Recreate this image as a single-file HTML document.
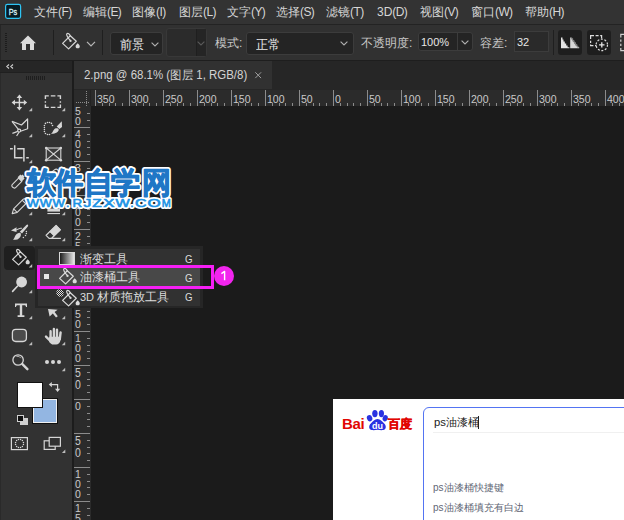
<!DOCTYPE html><html><head><meta charset="utf-8"><style>
*{margin:0;padding:0;box-sizing:border-box}
html,body{width:624px;height:520px;overflow:hidden;background:#1b1b1b;font-family:"Liberation Sans",sans-serif;position:relative}
.a{position:absolute}
.menu span{position:absolute;top:5px;font-size:12px;color:#d6d6d6;white-space:nowrap;line-height:15px}
.sep{position:absolute;width:1px;background:#1f1f1f}
.dd{position:absolute;background:#242424;border:1px solid #3c3c3c;border-radius:3px}
.lbl{position:absolute;font-size:12px;color:#c8c8c8;white-space:nowrap;line-height:15px}
.rn{position:absolute;font-size:10.5px;color:#c9c9c9;line-height:10px;white-space:nowrap}
.t{position:absolute;background:#8c8c8c}
.ic{position:absolute;overflow:visible}
.fl{position:absolute;font-size:12px;color:#dcdcdc;white-space:nowrap;line-height:15px}
</style></head><body>
<div class="a menu" style="left:0;top:0;width:624px;height:24px;background:#333333">
<svg class="ic" style="left:0;top:0" width="26" height="24" viewBox="0 0 26 24"><rect x="5.6" y="4.4" width="15" height="14" rx="1.8" fill="#061c24" stroke="#2ec4f4" stroke-width="1.2"/><text x="8.7" y="15.1" textLength="8.5" lengthAdjust="spacingAndGlyphs" font-family="Liberation Sans" font-size="9.6" fill="#dff5fb" stroke="#dff5fb" stroke-width="0.3">Ps</text></svg>
<span style="left:34px">文件<i style="font-style:normal;letter-spacing:-0.6px">(F)</i></span>
<span style="left:83px">编辑<i style="font-style:normal;letter-spacing:-0.6px">(E)</i></span>
<span style="left:132px">图像<i style="font-style:normal;letter-spacing:-0.6px">(I)</i></span>
<span style="left:179px">图层<i style="font-style:normal;letter-spacing:-0.6px">(L)</i></span>
<span style="left:227px">文字<i style="font-style:normal;letter-spacing:-0.6px">(Y)</i></span>
<span style="left:276px">选择<i style="font-style:normal;letter-spacing:-0.6px">(S)</i></span>
<span style="left:326px">滤镜<i style="font-style:normal;letter-spacing:-0.6px">(T)</i></span>
<span style="left:377px">3D<i style="font-style:normal;letter-spacing:-0.6px">(D)</i></span>
<span style="left:420px">视图<i style="font-style:normal;letter-spacing:-0.6px">(V)</i></span>
<span style="left:471px">窗口<i style="font-style:normal;letter-spacing:-0.6px">(W)</i></span>
<span style="left:525px">帮助<i style="font-style:normal;letter-spacing:-0.6px">(H)</i></span>
</div>
<div class="a" style="left:0;top:24px;width:624px;height:1px;background:#232323"></div>
<div class="a" style="left:0;top:25px;width:624px;height:35px;background:#313131"></div>
<div class="a" style="left:0;top:60px;width:624px;height:1px;background:#1e1e1e"></div>
<div class="a" style="left:5px;top:33px;width:2px;height:1px;background:#1c1c1c"></div>
<div class="a" style="left:5px;top:35px;width:2px;height:1px;background:#1c1c1c"></div>
<div class="a" style="left:5px;top:37px;width:2px;height:1px;background:#1c1c1c"></div>
<div class="a" style="left:5px;top:39px;width:2px;height:1px;background:#1c1c1c"></div>
<div class="a" style="left:5px;top:41px;width:2px;height:1px;background:#1c1c1c"></div>
<div class="a" style="left:5px;top:43px;width:2px;height:1px;background:#1c1c1c"></div>
<div class="a" style="left:5px;top:45px;width:2px;height:1px;background:#1c1c1c"></div>
<div class="a" style="left:5px;top:47px;width:2px;height:1px;background:#1c1c1c"></div>
<div class="a" style="left:5px;top:49px;width:2px;height:1px;background:#1c1c1c"></div>
<div class="a" style="left:5px;top:51px;width:2px;height:1px;background:#1c1c1c"></div>
<div class="a" style="left:0;top:25px;width:1px;height:35px;background:#262626"></div>
<svg class="ic" style="left:19px;top:35px" width="18" height="16" viewBox="0 0 18 16"><path d="M9 0.5 L17 8.2 L15 8.2 L15 15 L11 15 L11 9 L7 9 L7 15 L3 15 L3 8.2 L1 8.2 Z" fill="#dcdcdc"/></svg>
<div class="sep" style="left:53px;top:30px;height:25px"></div>
<div class="sep" style="left:102px;top:30px;height:25px"></div>
<svg class="ic" style="left:61px;top:33px" width="20.0" height="19.0" viewBox="0 0 20 19"><g fill="none" stroke="#d6d6d6" stroke-width="1.2" stroke-linejoin="round" stroke-linecap="round"><path d="M1.6 10.4 L7.6 15.9 L15.3 8.3 L9.3 2.8 Z"/><path d="M9.3 2.8 C8.6 1.2 6.9 -0.1 5.9 0.7 C5 1.5 6.4 4.2 9.3 7.4"/></g><circle cx="9.5" cy="7.9" r="1.15" fill="#d6d6d6"/><path d="M16.7 10.2 C17.6 11.3 18.8 12.2 18.8 13.4 C18.8 14.6 17.9 15.3 16.7 15.3 C15.5 15.3 14.6 14.6 14.6 13.4 C14.6 12.2 15.8 11.3 16.7 10.2 Z" fill="#d6d6d6"/></svg>
<svg class="ic" style="left:86px;top:41px" width="10" height="6" viewBox="0 0 10 6"><path d="M1 0.8 L5 4.8 L9 0.8" fill="none" stroke="#b8b8b8" stroke-width="1.2"/></svg>
<div class="dd" style="left:110px;top:32px;width:53px;height:23px"></div>
<div class="lbl" style="left:120px;top:37px;color:#e8e8e8;font-size:13px;transform:scaleX(0.93);transform-origin:0 0">前景</div>
<svg class="ic" style="left:151px;top:42px" width="8" height="5" viewBox="0 0 8 5"><path d="M0.6 0.6 L4 4 L7.4 0.6" fill="none" stroke="#b0b0b0" stroke-width="1.1"/></svg>
<div class="dd" style="left:166px;top:28px;width:41px;height:29px;background:#2b2b2b;border-color:#383838"></div>
<div class="a" style="left:196px;top:29px;width:10px;height:27px;background:#252525;border-left:1px solid #1f1f1f"></div>
<svg class="ic" style="left:197px;top:41px" width="8" height="5" viewBox="0 0 8 5"><path d="M0.6 0.6 L4 4 L7.4 0.6" fill="none" stroke="#5a5a5a" stroke-width="1.1"/></svg>
<div class="lbl" style="left:215px;top:36px">模式:</div>
<div class="dd" style="left:246px;top:32px;width:108px;height:23px"></div>
<div class="lbl" style="left:256px;top:37px;color:#e8e8e8;font-size:13px;transform:scaleX(0.93);transform-origin:0 0">正常</div>
<svg class="ic" style="left:340px;top:41px" width="8" height="5" viewBox="0 0 8 5"><path d="M0.6 0.6 L4 4 L7.4 0.6" fill="none" stroke="#b0b0b0" stroke-width="1.1"/></svg>
<div class="lbl" style="left:361px;top:36px">不透明度:</div>
<div class="dd" style="left:418px;top:32px;width:55px;height:19px"></div>
<div class="a" style="left:457px;top:33px;width:1px;height:17px;background:#3c3c3c"></div>
<div class="lbl" style="left:421px;top:35px;color:#e6e6e6;font-size:11px">100%</div>
<svg class="ic" style="left:461px;top:40px" width="8" height="5" viewBox="0 0 8 5"><path d="M0.6 0.6 L4 4 L7.4 0.6" fill="none" stroke="#b0b0b0" stroke-width="1.1"/></svg>
<div class="lbl" style="left:480px;top:36px">容差:</div>
<div class="dd" style="left:514px;top:31px;width:35px;height:21px;border-radius:0;background:#2a2a2a"></div>
<div class="lbl" style="left:517px;top:35px;color:#e6e6e6;font-size:11px">32</div>
<div class="sep" style="left:553px;top:30px;height:25px"></div>
<div class="a" style="left:558px;top:30px;width:24px;height:25px;background:#1e1e1e;border-radius:3px"></div>
<div class="a" style="left:587px;top:30px;width:24px;height:25px;background:#1e1e1e;border-radius:3px"></div>
<svg class="ic" style="left:0;top:0" width="624" height="60" viewBox="0 0 624 60"><path d="M561 37.4 H562.5 V39.4 H563.5 V41.4 H564.8 V43.4 H566.2 V45.4 H567.6 V47.2 H569.4 V48.2 H561 Z" fill="#e4e4e4"/><path d="M570.2 37.4 H571.6 V39.4 H572.8 V41.4 H574.2 V43.4 H575.6 V45.4 H577.2 V47.2 H579.2 V48.2 H570.2 Z" fill="#d8d8d8"/><path d="M571.6 38.4 H572.6 V40.4 H574 V42.4 H575.4 V44.4 H576.8 V46.4 H578.4" fill="none" stroke="#8a8a8a" stroke-width="1"/><g fill="none" stroke="#dcdcdc" stroke-width="1.2"><path d="M590.6 39 V35.6 H594 M595.6 35.6 H598.6 M600.2 35.6 H601.6 V38.6 M590.6 40.8 V43 M590.6 44.4 V45.6 H593.4 M595 45.6 H596.4"/><circle cx="601.8" cy="44.9" r="5.7" stroke-dasharray="2 1.6"/></g><path d="M601.8 42.2 V47.6 M599.1 44.9 H604.5" stroke="#e8e8e8" stroke-width="1.3"/><path d="M624 34.4 H620.8 V37.4 M620.8 39.4 V41.8 M620.8 43.8 V46 M620.8 48 V50.6 H624" fill="none" stroke="#d0d0d0" stroke-width="1.2"/></svg>
<div class="a" style="left:0;top:61px;width:72px;height:459px;background:#323232"></div>
<div class="a" style="left:0;top:61px;width:72px;height:12px;background:#262626"></div>
<div class="a" style="left:0;top:72px;width:72px;height:1px;background:#202020"></div>
<div class="a" style="left:0;top:73px;width:1px;height:447px;background:#2a2a2a"></div>
<svg class="ic" style="left:6px;top:64px" width="8" height="5" viewBox="0 0 8 5"><path d="M3 0.5 L0.8 2.5 L3 4.5 M7 0.5 L4.8 2.5 L7 4.5" fill="none" stroke="#cfcfcf" stroke-width="1.1"/></svg>
<div class="a" style="left:72px;top:61px;width:2px;height:459px;background:#1c1c1c"></div>
<div class="a" style="left:26px;top:76px;width:1px;height:4px;background:#1e1e1e"></div>
<div class="a" style="left:28px;top:76px;width:1px;height:4px;background:#1e1e1e"></div>
<div class="a" style="left:30px;top:76px;width:1px;height:4px;background:#1e1e1e"></div>
<div class="a" style="left:32px;top:76px;width:1px;height:4px;background:#1e1e1e"></div>
<div class="a" style="left:34px;top:76px;width:1px;height:4px;background:#1e1e1e"></div>
<div class="a" style="left:36px;top:76px;width:1px;height:4px;background:#1e1e1e"></div>
<div class="a" style="left:38px;top:76px;width:1px;height:4px;background:#1e1e1e"></div>
<div class="a" style="left:40px;top:76px;width:1px;height:4px;background:#1e1e1e"></div>
<div class="a" style="left:42px;top:76px;width:1px;height:4px;background:#1e1e1e"></div>
<div class="a" style="left:44px;top:76px;width:1px;height:4px;background:#1e1e1e"></div>
<div class="a" style="left:74px;top:61px;width:550px;height:29px;background:#262626"></div>
<div class="a" style="left:74px;top:61px;width:198px;height:28px;background:#313131"></div>
<div class="a" style="left:84px;top:68px;font-size:12px;color:#d4d4d4;white-space:nowrap;line-height:15px;transform:scaleX(0.955);transform-origin:0 0">2.png @ 68.1% (图层 1, RGB/8)</div>
<svg class="ic" style="left:255px;top:72px" width="7" height="7" viewBox="0 0 7 7"><path d="M0.3 0.3 L6.1 6.1 M6.1 0.3 L0.3 6.1" stroke="#a0a0a0" stroke-width="1"/></svg>
<div class="a" style="left:74px;top:90px;width:550px;height:16px;background:#2b2b2b"></div>
<div class="a" style="left:74px;top:90px;width:17px;height:430px;background:#2b2b2b"></div>
<div class="a" style="left:86px;top:91px;width:1px;height:1px;background:#8a8a8a"></div>
<div class="a" style="left:86px;top:93px;width:1px;height:1px;background:#8a8a8a"></div>
<div class="a" style="left:86px;top:95px;width:1px;height:1px;background:#8a8a8a"></div>
<div class="a" style="left:86px;top:97px;width:1px;height:1px;background:#8a8a8a"></div>
<div class="a" style="left:86px;top:99px;width:1px;height:1px;background:#8a8a8a"></div>
<div class="a" style="left:86px;top:101px;width:1px;height:1px;background:#8a8a8a"></div>
<div class="a" style="left:86px;top:103px;width:1px;height:1px;background:#8a8a8a"></div>
<div class="a" style="left:86px;top:105px;width:1px;height:1px;background:#8a8a8a"></div>
<div class="a" style="left:76px;top:102px;width:1px;height:1px;background:#8a8a8a"></div>
<div class="a" style="left:78px;top:102px;width:1px;height:1px;background:#8a8a8a"></div>
<div class="a" style="left:80px;top:102px;width:1px;height:1px;background:#8a8a8a"></div>
<div class="a" style="left:82px;top:102px;width:1px;height:1px;background:#8a8a8a"></div>
<div class="a" style="left:84px;top:102px;width:1px;height:1px;background:#8a8a8a"></div>
<div class="a" style="left:86px;top:102px;width:1px;height:1px;background:#8a8a8a"></div>
<div class="a" style="left:88px;top:102px;width:1px;height:1px;background:#8a8a8a"></div>
<div class="a" style="left:90px;top:90px;width:1px;height:16px;background:#232323"></div>
<div class="t" style="left:95px;top:90px;width:1px;height:16px"></div>
<div class="rn" style="left:97px;top:94px">350</div>
<div class="t" style="left:102px;top:103px;width:1px;height:3px"></div>
<div class="t" style="left:109px;top:103px;width:1px;height:3px"></div>
<div class="t" style="left:115px;top:103px;width:1px;height:3px"></div>
<div class="t" style="left:122px;top:103px;width:1px;height:3px"></div>
<div class="t" style="left:129px;top:90px;width:1px;height:16px"></div>
<div class="rn" style="left:131px;top:94px">300</div>
<div class="t" style="left:136px;top:103px;width:1px;height:3px"></div>
<div class="t" style="left:143px;top:103px;width:1px;height:3px"></div>
<div class="t" style="left:149px;top:103px;width:1px;height:3px"></div>
<div class="t" style="left:156px;top:103px;width:1px;height:3px"></div>
<div class="t" style="left:163px;top:90px;width:1px;height:16px"></div>
<div class="rn" style="left:165px;top:94px">250</div>
<div class="t" style="left:170px;top:103px;width:1px;height:3px"></div>
<div class="t" style="left:177px;top:103px;width:1px;height:3px"></div>
<div class="t" style="left:183px;top:103px;width:1px;height:3px"></div>
<div class="t" style="left:190px;top:103px;width:1px;height:3px"></div>
<div class="t" style="left:197px;top:90px;width:1px;height:16px"></div>
<div class="rn" style="left:199px;top:94px">200</div>
<div class="t" style="left:204px;top:103px;width:1px;height:3px"></div>
<div class="t" style="left:211px;top:103px;width:1px;height:3px"></div>
<div class="t" style="left:217px;top:103px;width:1px;height:3px"></div>
<div class="t" style="left:224px;top:103px;width:1px;height:3px"></div>
<div class="t" style="left:231px;top:90px;width:1px;height:16px"></div>
<div class="rn" style="left:233px;top:94px">150</div>
<div class="t" style="left:238px;top:103px;width:1px;height:3px"></div>
<div class="t" style="left:245px;top:103px;width:1px;height:3px"></div>
<div class="t" style="left:251px;top:103px;width:1px;height:3px"></div>
<div class="t" style="left:258px;top:103px;width:1px;height:3px"></div>
<div class="t" style="left:265px;top:90px;width:1px;height:16px"></div>
<div class="rn" style="left:267px;top:94px">100</div>
<div class="t" style="left:272px;top:103px;width:1px;height:3px"></div>
<div class="t" style="left:279px;top:103px;width:1px;height:3px"></div>
<div class="t" style="left:285px;top:103px;width:1px;height:3px"></div>
<div class="t" style="left:292px;top:103px;width:1px;height:3px"></div>
<div class="t" style="left:299px;top:90px;width:1px;height:16px"></div>
<div class="rn" style="left:301px;top:94px">50</div>
<div class="t" style="left:306px;top:103px;width:1px;height:3px"></div>
<div class="t" style="left:313px;top:103px;width:1px;height:3px"></div>
<div class="t" style="left:319px;top:103px;width:1px;height:3px"></div>
<div class="t" style="left:326px;top:103px;width:1px;height:3px"></div>
<div class="t" style="left:333px;top:90px;width:1px;height:16px"></div>
<div class="rn" style="left:335px;top:94px">0</div>
<div class="t" style="left:340px;top:103px;width:1px;height:3px"></div>
<div class="t" style="left:347px;top:103px;width:1px;height:3px"></div>
<div class="t" style="left:353px;top:103px;width:1px;height:3px"></div>
<div class="t" style="left:360px;top:103px;width:1px;height:3px"></div>
<div class="t" style="left:367px;top:90px;width:1px;height:16px"></div>
<div class="rn" style="left:369px;top:94px">50</div>
<div class="t" style="left:374px;top:103px;width:1px;height:3px"></div>
<div class="t" style="left:381px;top:103px;width:1px;height:3px"></div>
<div class="t" style="left:387px;top:103px;width:1px;height:3px"></div>
<div class="t" style="left:394px;top:103px;width:1px;height:3px"></div>
<div class="t" style="left:401px;top:90px;width:1px;height:16px"></div>
<div class="rn" style="left:403px;top:94px">100</div>
<div class="t" style="left:408px;top:103px;width:1px;height:3px"></div>
<div class="t" style="left:415px;top:103px;width:1px;height:3px"></div>
<div class="t" style="left:421px;top:103px;width:1px;height:3px"></div>
<div class="t" style="left:428px;top:103px;width:1px;height:3px"></div>
<div class="t" style="left:435px;top:90px;width:1px;height:16px"></div>
<div class="rn" style="left:437px;top:94px">150</div>
<div class="t" style="left:442px;top:103px;width:1px;height:3px"></div>
<div class="t" style="left:449px;top:103px;width:1px;height:3px"></div>
<div class="t" style="left:455px;top:103px;width:1px;height:3px"></div>
<div class="t" style="left:462px;top:103px;width:1px;height:3px"></div>
<div class="t" style="left:469px;top:90px;width:1px;height:16px"></div>
<div class="rn" style="left:471px;top:94px">200</div>
<div class="t" style="left:476px;top:103px;width:1px;height:3px"></div>
<div class="t" style="left:483px;top:103px;width:1px;height:3px"></div>
<div class="t" style="left:489px;top:103px;width:1px;height:3px"></div>
<div class="t" style="left:496px;top:103px;width:1px;height:3px"></div>
<div class="t" style="left:503px;top:90px;width:1px;height:16px"></div>
<div class="rn" style="left:505px;top:94px">250</div>
<div class="t" style="left:510px;top:103px;width:1px;height:3px"></div>
<div class="t" style="left:517px;top:103px;width:1px;height:3px"></div>
<div class="t" style="left:523px;top:103px;width:1px;height:3px"></div>
<div class="t" style="left:530px;top:103px;width:1px;height:3px"></div>
<div class="t" style="left:537px;top:90px;width:1px;height:16px"></div>
<div class="rn" style="left:539px;top:94px">300</div>
<div class="t" style="left:544px;top:103px;width:1px;height:3px"></div>
<div class="t" style="left:551px;top:103px;width:1px;height:3px"></div>
<div class="t" style="left:557px;top:103px;width:1px;height:3px"></div>
<div class="t" style="left:564px;top:103px;width:1px;height:3px"></div>
<div class="t" style="left:571px;top:90px;width:1px;height:16px"></div>
<div class="rn" style="left:573px;top:94px">350</div>
<div class="t" style="left:578px;top:103px;width:1px;height:3px"></div>
<div class="t" style="left:585px;top:103px;width:1px;height:3px"></div>
<div class="t" style="left:591px;top:103px;width:1px;height:3px"></div>
<div class="t" style="left:598px;top:103px;width:1px;height:3px"></div>
<div class="t" style="left:605px;top:90px;width:1px;height:16px"></div>
<div class="rn" style="left:607px;top:94px">400</div>
<div class="t" style="left:612px;top:103px;width:1px;height:3px"></div>
<div class="t" style="left:619px;top:103px;width:1px;height:3px"></div>
<div class="rn" style="left:75px;top:106px;">5</div>
<div class="rn" style="left:75px;top:116px;">0</div>
<div class="t" style="left:87px;top:113px;width:3px;height:1px"></div>
<div class="t" style="left:87px;top:120px;width:3px;height:1px"></div>
<div class="t" style="left:74px;top:127px;width:16px;height:1px"></div>
<div class="rn" style="left:75px;top:129px;">4</div>
<div class="rn" style="left:75px;top:139px;">0</div>
<div class="rn" style="left:75px;top:149px;">0</div>
<div class="t" style="left:87px;top:134px;width:3px;height:1px"></div>
<div class="t" style="left:87px;top:141px;width:3px;height:1px"></div>
<div class="t" style="left:87px;top:147px;width:3px;height:1px"></div>
<div class="t" style="left:87px;top:154px;width:3px;height:1px"></div>
<div class="t" style="left:74px;top:161px;width:16px;height:1px"></div>
<div class="rn" style="left:75px;top:163px;">3</div>
<div class="rn" style="left:75px;top:173px;">5</div>
<div class="rn" style="left:75px;top:183px;">0</div>
<div class="t" style="left:87px;top:168px;width:3px;height:1px"></div>
<div class="t" style="left:87px;top:175px;width:3px;height:1px"></div>
<div class="t" style="left:87px;top:181px;width:3px;height:1px"></div>
<div class="t" style="left:87px;top:188px;width:3px;height:1px"></div>
<div class="t" style="left:74px;top:195px;width:16px;height:1px"></div>
<div class="rn" style="left:75px;top:197px;">3</div>
<div class="rn" style="left:75px;top:207px;">0</div>
<div class="rn" style="left:75px;top:217px;">0</div>
<div class="t" style="left:87px;top:202px;width:3px;height:1px"></div>
<div class="t" style="left:87px;top:209px;width:3px;height:1px"></div>
<div class="t" style="left:87px;top:215px;width:3px;height:1px"></div>
<div class="t" style="left:87px;top:222px;width:3px;height:1px"></div>
<div class="t" style="left:74px;top:229px;width:16px;height:1px"></div>
<div class="rn" style="left:75px;top:231px;">2</div>
<div class="rn" style="left:75px;top:241px;">5</div>
<div class="rn" style="left:75px;top:251px;">0</div>
<div class="t" style="left:87px;top:236px;width:3px;height:1px"></div>
<div class="t" style="left:87px;top:243px;width:3px;height:1px"></div>
<div class="t" style="left:87px;top:249px;width:3px;height:1px"></div>
<div class="t" style="left:87px;top:256px;width:3px;height:1px"></div>
<div class="t" style="left:74px;top:263px;width:16px;height:1px"></div>
<div class="rn" style="left:75px;top:265px;">2</div>
<div class="rn" style="left:75px;top:275px;">0</div>
<div class="rn" style="left:75px;top:285px;">0</div>
<div class="t" style="left:87px;top:270px;width:3px;height:1px"></div>
<div class="t" style="left:87px;top:277px;width:3px;height:1px"></div>
<div class="t" style="left:87px;top:283px;width:3px;height:1px"></div>
<div class="t" style="left:87px;top:290px;width:3px;height:1px"></div>
<div class="t" style="left:74px;top:297px;width:16px;height:1px"></div>
<div class="rn" style="left:75px;top:299px;">1</div>
<div class="rn" style="left:75px;top:309px;">5</div>
<div class="rn" style="left:75px;top:319px;">0</div>
<div class="t" style="left:87px;top:304px;width:3px;height:1px"></div>
<div class="t" style="left:87px;top:311px;width:3px;height:1px"></div>
<div class="t" style="left:87px;top:317px;width:3px;height:1px"></div>
<div class="t" style="left:87px;top:324px;width:3px;height:1px"></div>
<div class="t" style="left:74px;top:331px;width:16px;height:1px"></div>
<div class="rn" style="left:75px;top:333px;">1</div>
<div class="rn" style="left:75px;top:343px;">0</div>
<div class="rn" style="left:75px;top:353px;">0</div>
<div class="t" style="left:87px;top:338px;width:3px;height:1px"></div>
<div class="t" style="left:87px;top:345px;width:3px;height:1px"></div>
<div class="t" style="left:87px;top:351px;width:3px;height:1px"></div>
<div class="t" style="left:87px;top:358px;width:3px;height:1px"></div>
<div class="t" style="left:74px;top:365px;width:16px;height:1px"></div>
<div class="rn" style="left:75px;top:367px;transform:scaleY(1.14);transform-origin:0 1px;">5</div>
<div class="rn" style="left:75px;top:379px;transform:scaleY(1.14);transform-origin:0 1px;">0</div>
<div class="t" style="left:87px;top:372px;width:3px;height:1px"></div>
<div class="t" style="left:87px;top:379px;width:3px;height:1px"></div>
<div class="t" style="left:87px;top:385px;width:3px;height:1px"></div>
<div class="t" style="left:87px;top:392px;width:3px;height:1px"></div>
<div class="t" style="left:74px;top:399px;width:16px;height:1px"></div>
<div class="rn" style="left:75px;top:401px;">0</div>
<div class="t" style="left:87px;top:406px;width:3px;height:1px"></div>
<div class="t" style="left:87px;top:413px;width:3px;height:1px"></div>
<div class="t" style="left:87px;top:419px;width:3px;height:1px"></div>
<div class="t" style="left:87px;top:426px;width:3px;height:1px"></div>
<div class="t" style="left:74px;top:433px;width:16px;height:1px"></div>
<div class="rn" style="left:75px;top:435px;transform:scaleY(1.14);transform-origin:0 1px;">5</div>
<div class="rn" style="left:75px;top:447px;transform:scaleY(1.14);transform-origin:0 1px;">0</div>
<div class="t" style="left:87px;top:440px;width:3px;height:1px"></div>
<div class="t" style="left:87px;top:447px;width:3px;height:1px"></div>
<div class="t" style="left:87px;top:453px;width:3px;height:1px"></div>
<div class="t" style="left:87px;top:460px;width:3px;height:1px"></div>
<div class="t" style="left:74px;top:467px;width:16px;height:1px"></div>
<div class="rn" style="left:75px;top:469px;">1</div>
<div class="rn" style="left:75px;top:479px;">0</div>
<div class="rn" style="left:75px;top:489px;">0</div>
<div class="t" style="left:87px;top:474px;width:3px;height:1px"></div>
<div class="t" style="left:87px;top:481px;width:3px;height:1px"></div>
<div class="t" style="left:87px;top:487px;width:3px;height:1px"></div>
<div class="t" style="left:87px;top:494px;width:3px;height:1px"></div>
<div class="t" style="left:74px;top:501px;width:16px;height:1px"></div>
<div class="rn" style="left:75px;top:503px;">1</div>
<div class="rn" style="left:75px;top:513px;">5</div>
<div class="t" style="left:87px;top:508px;width:3px;height:1px"></div>
<div class="t" style="left:87px;top:515px;width:3px;height:1px"></div>
<div class="t" style="left:74px;top:535px;width:16px;height:1px"></div>
<div class="a" style="left:4px;top:246px;width:31px;height:24px;background:#1f1f1f;border-radius:4px"></div>
<svg class="ic" style="left:0;top:0" width="72" height="520" viewBox="0 0 72 520"><g stroke="#d6d6d6" stroke-width="1.4" fill="none"><path d="M19.4 97 V108 M14 102.5 H25"/></g><g fill="#d6d6d6"><path d="M19.4 94.6 L22.2 98 L16.6 98 Z"/><path d="M19.4 110.4 L22.2 107 L16.6 107 Z"/><path d="M11.6 102.5 L15 99.7 L15 105.3 Z"/><path d="M27.2 102.5 L23.8 99.7 L23.8 105.3 Z"/></g><path d="M32.2 107.8 L32.2 111.2 L28.8 111.2 Z" fill="#bdbdbd"/><path d="M45.4 99 V95.9 H48.8 M50.8 95.9 H55.4 M57.4 95.9 H60.4 V99 M60.4 101.2 V102.8 M60.4 104.6 V107.4 H57.4 M55.4 107.4 H50.8 M48.8 107.4 H45.4 V104.6 M45.4 102.8 V101.2" fill="none" stroke="#d6d6d6" stroke-width="1.4"/><path d="M65.2 107.8 L65.2 111.2 L61.8 111.2 Z" fill="#bdbdbd"/><g fill="none" stroke="#d6d6d6" stroke-width="1.2" stroke-linejoin="round"><path d="M12 121.4 L21.5 125 L27.6 119 L27.6 128.8 L20.6 131.2"/><path d="M12 121.4 L18.6 129.6"/><circle cx="19.2" cy="130.6" r="1.5"/><path d="M17.8 131.4 L12.4 133.4 M19 132.2 L16.6 136"/></g><path d="M32.2 133.8 L32.2 137.20000000000002 L28.8 137.20000000000002 Z" fill="#bdbdbd"/><g fill="#d6d6d6"><circle cx="45.45" cy="123.4" r="0.8"/><circle cx="47.5" cy="122.5" r="0.8"/><circle cx="49.5" cy="122.5" r="0.8"/><circle cx="51.45" cy="123.4" r="0.8"/><circle cx="52.5" cy="125.5" r="0.8"/><circle cx="44.4" cy="125.5" r="0.8"/><circle cx="44.4" cy="127.5" r="0.8"/><circle cx="44.4" cy="129.5" r="0.8"/><circle cx="44.4" cy="131.5" r="0.8"/><circle cx="45.45" cy="133.5" r="0.8"/><circle cx="47.5" cy="134.5" r="0.8"/><circle cx="49.5" cy="134.5" r="0.8"/></g><path d="M61.8 121.3 L62 127 L59.4 128.9 L56.7 126.6 Z" fill="#d6d6d6"/><path d="M58.7 129.6 C58.4 128.4 57.2 127.9 55.8 128.3 C54.2 128.8 53.4 130.4 52.6 132 C52.2 132.8 51.6 133.4 50.8 133.8 C52.8 133.9 55.2 133.7 56.8 132.6 C58.1 131.7 58.9 130.7 58.7 129.6 Z" fill="#d6d6d6"/><path d="M65.2 133.8 L65.2 137.20000000000002 L61.8 137.20000000000002 Z" fill="#bdbdbd"/><g fill="none" stroke="#d6d6d6" stroke-width="1.5"><path d="M10 148.8 H12.8 M14.7 145.2 V157.8 H22.6 M17.2 148.8 H23.9 V161.6 M26.2 157.8 H28.8"/></g><path d="M32.2 159.8 L32.2 163.20000000000002 L28.8 163.20000000000002 Z" fill="#bdbdbd"/><rect x="46.2" y="148" width="14.6" height="12.2" fill="#3a3a3a" stroke="#d6d6d6" stroke-width="1.1"/><path d="M46.2 148 L60.8 160.2 M60.8 148 L46.2 160.2" stroke="#d6d6d6" stroke-width="1.1"/><g fill="#d6d6d6"><circle cx="46.2" cy="148" r="1.3"/><circle cx="60.8" cy="148" r="1.3"/><circle cx="46.2" cy="160.2" r="1.3"/><circle cx="60.8" cy="160.2" r="1.3"/></g><path d="M12.6 187.2 C11.6 186.4 11.6 185.2 12.4 184.4 L18.6 178.2 L21.8 181.4 L15.6 187.6 C14.8 188.4 13.4 188 12.6 187.2 Z" fill="none" stroke="#d6d6d6" stroke-width="1.1" stroke-linejoin="round"/><path d="M17.6 177.2 L20.4 174.4 L21.4 175.4 L22.4 174.4 L24.6 176.6 L23.6 177.6 L24.6 178.6 L21.8 181.4 Z" fill="#d6d6d6"/><rect x="46" y="172" width="15" height="9" rx="2.5" fill="none" stroke="#d6d6d6" stroke-width="1.2" transform="rotate(-40 53.5 176.5)"/><path d="M12.2 213.6 L13.6 208.8 L23 199.4 C23.8 198.6 24.8 198.6 25.6 199.4 L26.6 200.4 C27.4 201.2 27.4 202.2 26.6 203 L17.2 212.4 Z M13.6 208.8 L17.2 212.4 M22.2 200.2 L25.8 203.8" fill="none" stroke="#d6d6d6" stroke-width="1.1" stroke-linejoin="round"/><path d="M32.2 211.8 L32.2 215.20000000000002 L28.8 215.20000000000002 Z" fill="#bdbdbd"/><rect x="47.4" y="208.6" width="12.6" height="3" fill="#d6d6d6"/><rect x="47.4" y="213" width="12.6" height="1.1" fill="#d6d6d6"/><path d="M65.2 211.8 L65.2 215.20000000000002 L61.8 215.20000000000002 Z" fill="#bdbdbd"/><path d="M11 230.4 L16.6 227.2 L16.4 229.6 C18.2 228.4 20 227.8 22 227.8 L21.8 228.8 C19.8 228.8 18.4 229.4 16.4 230.6 L16.6 232 Z" fill="#d6d6d6"/><path d="M27.6 224.4 C28.4 224.8 28.2 225.8 27.8 226.6 L22 233.4 L19.8 231.8 L26.4 225 C26.8 224.6 27.2 224.3 27.6 224.4 Z" fill="#d6d6d6"/><path d="M20.8 233.6 C21.4 235.8 20 238.6 17.4 239.4 C16 239.8 14.4 239.8 13 239.8 C14 239 14.4 237.8 14.8 236.8 C15.6 234.6 17.4 233 19.4 232.8 C20 232.8 20.6 233 20.8 233.6 Z" fill="#d6d6d6"/><g fill="#d6d6d6"><circle cx="26.4" cy="231.4" r="0.75"/><circle cx="26.4" cy="233.5" r="0.75"/><circle cx="25.5" cy="235.5" r="0.75"/><circle cx="23.4" cy="237.4" r="0.75"/></g><path d="M32.2 237.8 L32.2 241.20000000000002 L28.8 241.20000000000002 Z" fill="#bdbdbd"/><path d="M51.6 238.3 L60.4 229.8 L56.1 225.5 L46.1 235.3 L49.1 238.3 H60.9" fill="none" stroke="#d6d6d6" stroke-width="1.2" stroke-linejoin="round"/><path d="M56.1 225.5 L60.4 229.8 L54 236.1 L49.8 231.8 Z" fill="#d6d6d6" stroke="#d6d6d6" stroke-width="0.8" stroke-linejoin="round"/><path d="M65.2 237.8 L65.2 241.20000000000002 L61.8 241.20000000000002 Z" fill="#bdbdbd"/><circle cx="21.6" cy="282" r="5.4" fill="#d6d6d6"/><path d="M17.6 286 L12.6 291.4" stroke="#d6d6d6" stroke-width="1.6" stroke-linecap="round"/><path d="M32.2 289.8 L32.2 293.2 L28.8 293.2 Z" fill="#bdbdbd"/><path d="M15 303.4 H27 V307 H26 C25.8 305.6 25.4 305.2 24 305.2 H22.2 V315.2 H24.4 V317 H17.6 V315.2 H19.8 V305.2 H18 C16.6 305.2 16.2 305.6 16 307 H15 Z" fill="#d6d6d6"/><path d="M32.2 315.8 L32.2 319.2 L28.8 319.2 Z" fill="#bdbdbd"/><path d="M48 309 L57.6 309.8 L54.6 312 L57.8 316.2 L56 317.6 L52.8 313.4 L49.6 316.6 Z" fill="#d6d6d6"/><path d="M65.2 315.8 L65.2 319.2 L61.8 319.2 Z" fill="#bdbdbd"/><rect x="12.4" y="329.3" width="14" height="12.2" rx="3.4" fill="#4b4b4b" stroke="#d6d6d6" stroke-width="1.3"/><path d="M32.2 341.8 L32.2 345.2 L28.8 345.2 Z" fill="#bdbdbd"/><g stroke="#d6d6d6" stroke-width="2.4" stroke-linecap="round"><path d="M50.6 331.2 V338.5 M53.9 329 V338 M57 329.8 V338 M60.6 332.4 L59.8 339 M46 336.6 L50.4 341"/></g><path d="M49.2 336.8 H61 L60.6 340 C60 342.8 58.4 344.6 56 344.6 H53.4 C51.6 344.6 50.4 343.4 49.2 342 Z" fill="#d6d6d6"/><path d="M65.2 341.8 L65.2 345.2 L61.8 345.2 Z" fill="#bdbdbd"/><circle cx="18.1" cy="360" r="5.2" fill="none" stroke="#d6d6d6" stroke-width="1.3"/><path d="M16.4 356.4 A3.6 3.6 0 0 1 20.8 358.2" fill="none" stroke="#d6d6d6" stroke-width="0.8"/><path d="M22.4 364.2 L27.4 369.2" stroke="#d6d6d6" stroke-width="2.4" stroke-linecap="round"/><g fill="#d6d6d6"><circle cx="47" cy="361.9" r="2"/><circle cx="53" cy="361.9" r="2"/><circle cx="59" cy="361.9" r="2"/></g><path d="M65.2 367.8 L65.2 371.2 L61.8 371.2 Z" fill="#bdbdbd"/><path d="M51 384.6 H57.6 V389" fill="none" stroke="#d6d6d6" stroke-width="1.2"/><path d="M48.8 384.6 L51.8 382 L51.8 387.2 Z" fill="#d6d6d6"/><path d="M57.6 392 L55 388.8 L60.2 388.8 Z" fill="#d6d6d6"/><rect x="11.4" y="437.6" width="16" height="12" fill="none" stroke="#d6d6d6" stroke-width="1.2"/><g fill="#d6d6d6"><circle cx="23.46" cy="444.56" r="0.75"/><circle cx="22.40" cy="446.40" r="0.75"/><circle cx="20.56" cy="447.46" r="0.75"/><circle cx="18.44" cy="447.46" r="0.75"/><circle cx="16.60" cy="446.40" r="0.75"/><circle cx="15.54" cy="444.56" r="0.75"/><circle cx="15.54" cy="442.44" r="0.75"/><circle cx="16.60" cy="440.60" r="0.75"/><circle cx="18.44" cy="439.54" r="0.75"/><circle cx="20.56" cy="439.54" r="0.75"/><circle cx="22.40" cy="440.60" r="0.75"/><circle cx="23.46" cy="442.44" r="0.75"/></g><rect x="44.2" y="440.8" width="11" height="8.6" fill="#323232" stroke="#d6d6d6" stroke-width="1.2"/><rect x="49.2" y="437.4" width="11.2" height="8.8" fill="#323232" stroke="#d6d6d6" stroke-width="1.2"/><path d="M65.3 449.6 L65.3 453.0 L61.9 453.0 Z" fill="#bdbdbd"/></svg>
<svg class="ic" style="left:11px;top:249px" width="20.0" height="19.0" viewBox="0 0 20 19"><g fill="none" stroke="#d6d6d6" stroke-width="1.2" stroke-linejoin="round" stroke-linecap="round"><path d="M1.6 10.4 L7.6 15.9 L15.3 8.3 L9.3 2.8 Z"/><path d="M9.3 2.8 C8.6 1.2 6.9 -0.1 5.9 0.7 C5 1.5 6.4 4.2 9.3 7.4"/></g><circle cx="9.5" cy="7.9" r="1.15" fill="#d6d6d6"/><path d="M16.7 10.2 C17.6 11.3 18.8 12.2 18.8 13.4 C18.8 14.6 17.9 15.3 16.7 15.3 C15.5 15.3 14.6 14.6 14.6 13.4 C14.6 12.2 15.8 11.3 16.7 10.2 Z" fill="#d6d6d6"/></svg>
<svg class="ic" style="left:0;top:0" width="72" height="520" viewBox="0 0 72 520"><path d="M32.2 264 L32.2 267.4 L28.8 267.4 Z" fill="#bdbdbd"/></svg>
<div class="a" style="left:32px;top:398px;width:26px;height:26px;background:#111"></div>
<div class="a" style="left:33px;top:399px;width:24px;height:24px;background:#93b6e2;border:1px solid #f0f0f0"></div>
<div class="a" style="left:17px;top:382px;width:26px;height:26px;background:#ffffff;border:1px solid #111"></div>
<div class="a" style="left:20px;top:418px;width:8px;height:7px;background:#d0d0d0"></div>
<div class="a" style="left:17px;top:415px;width:7px;height:7px;background:#111;border:1px solid #d0d0d0"></div>
<div class="a" style="left:35px;top:246px;width:168px;height:62px;background:#262626"></div>
<div class="a" style="left:38px;top:249px;width:162px;height:57px;background:#313131"></div>
<div class="a" style="left:40px;top:268px;width:160px;height:18px;background:#484848"></div>
<div class="a" style="left:59px;top:252px;width:16px;height:13px;border:1px solid #d8d8d8;background:linear-gradient(90deg,#1c1c1c,#e6e6e6)"></div>
<div class="fl" style="left:80px;top:252px">渐变工具</div>
<div class="fl" style="left:185px;top:252px;font-size:11px;transform:scaleX(0.88);transform-origin:0 0">G</div>
<div class="a" style="left:44px;top:274px;width:5px;height:5px;background:#e6e6e6"></div>
<svg class="ic" style="left:58px;top:268px" width="20.0" height="19.0" viewBox="0 0 20 19"><g fill="none" stroke="#dcdcdc" stroke-width="1.2" stroke-linejoin="round" stroke-linecap="round"><path d="M1.6 10.4 L7.6 15.9 L15.3 8.3 L9.3 2.8 Z"/><path d="M9.3 2.8 C8.6 1.2 6.9 -0.1 5.9 0.7 C5 1.5 6.4 4.2 9.3 7.4"/></g><circle cx="9.5" cy="7.9" r="1.15" fill="#dcdcdc"/><path d="M16.7 10.2 C17.6 11.3 18.8 12.2 18.8 13.4 C18.8 14.6 17.9 15.3 16.7 15.3 C15.5 15.3 14.6 14.6 14.6 13.4 C14.6 12.2 15.8 11.3 16.7 10.2 Z" fill="#dcdcdc"/></svg>
<div class="fl" style="left:80px;top:270px">油漆桶工具</div>
<div class="fl" style="left:185px;top:271px;font-size:11px;transform:scaleX(0.88);transform-origin:0 0">G</div>
<svg class="ic" style="left:56px;top:289px" width="8" height="8" viewBox="0 0 8 8"><defs><pattern id="ck" width="2" height="2" patternUnits="userSpaceOnUse"><rect width="1" height="1" fill="#e0e0e0"/><rect x="1" y="1" width="1" height="1" fill="#e0e0e0"/><rect x="1" width="1" height="1" fill="#222"/><rect y="1" width="1" height="1" fill="#222"/></pattern></defs><circle cx="4" cy="4" r="3.7" fill="url(#ck)"/></svg>
<svg class="ic" style="left:61px;top:290px" width="20.0" height="19.0" viewBox="0 0 20 19"><g fill="none" stroke="#dcdcdc" stroke-width="1.2" stroke-linejoin="round" stroke-linecap="round"><path d="M1.6 10.4 L7.6 15.9 L15.3 8.3 L9.3 2.8 Z"/><path d="M9.3 2.8 C8.6 1.2 6.9 -0.1 5.9 0.7 C5 1.5 6.4 4.2 9.3 7.4"/></g><circle cx="9.5" cy="7.9" r="1.15" fill="#dcdcdc"/><path d="M16.7 10.2 C17.6 11.3 18.8 12.2 18.8 13.4 C18.8 14.6 17.9 15.3 16.7 15.3 C15.5 15.3 14.6 14.6 14.6 13.4 C14.6 12.2 15.8 11.3 16.7 10.2 Z" fill="#dcdcdc"/></svg>
<div class="fl" style="left:80px;top:290px"><span style="font-size:11px;letter-spacing:-0.2px">3D</span> 材质拖放工具</div>
<div class="fl" style="left:185px;top:290px;font-size:11px;transform:scaleX(0.88);transform-origin:0 0">G</div>
<div class="a" style="left:37px;top:265px;width:177px;height:24px;border:3px solid #f61ff6"></div>
<div class="a" style="left:214px;top:266px;width:20px;height:20px;border-radius:50%;background:#f225ee"></div>
<svg class="ic" style="left:214px;top:266px" width="20" height="20" viewBox="214 266 20 20"><path d="M221.4 273.6 L224.6 271.4 V280.2" fill="none" stroke="#fff" stroke-width="1.4" stroke-linejoin="round"/></svg>
<svg class="ic" style="left:0;top:0" width="200" height="220" viewBox="0 0 200 220"><text x="41.7" y="0" text-anchor="middle" transform="translate(0,193.3) scale(1,1.03)" font-family="Liberation Sans" font-size="29" font-weight="bold" fill="#fff" stroke="#fff" stroke-width="4.6" stroke-linejoin="round">软</text><text x="68.5" y="0" text-anchor="middle" transform="translate(0,193.3) scale(1,1.03)" font-family="Liberation Sans" font-size="29" font-weight="bold" fill="#fff" stroke="#fff" stroke-width="4.6" stroke-linejoin="round">件</text><text x="98" y="0" text-anchor="middle" transform="translate(0,193.3) scale(1,1.03)" font-family="Liberation Sans" font-size="29" font-weight="bold" fill="#fff" stroke="#fff" stroke-width="4.6" stroke-linejoin="round">自</text><text x="125.5" y="0" text-anchor="middle" transform="translate(0,193.3) scale(1,1.03)" font-family="Liberation Sans" font-size="29" font-weight="bold" fill="#fff" stroke="#fff" stroke-width="4.6" stroke-linejoin="round">学</text><text x="156" y="0" text-anchor="middle" transform="translate(0,193.3) scale(1,1.03)" font-family="Liberation Sans" font-size="29" font-weight="bold" fill="#fff" stroke="#fff" stroke-width="4.6" stroke-linejoin="round">网</text><text x="26.799999999999997" y="207.2" textLength="12.2" lengthAdjust="spacingAndGlyphs" font-family="Liberation Sans" font-size="11" font-weight="normal" fill="#fff" stroke="#fff" stroke-width="3.8" stroke-linejoin="round">W</text><text x="39.699999999999996" y="207.2" textLength="12" lengthAdjust="spacingAndGlyphs" font-family="Liberation Sans" font-size="11" font-weight="normal" fill="#fff" stroke="#fff" stroke-width="3.8" stroke-linejoin="round">W</text><text x="52.5" y="207.2" textLength="12.3" lengthAdjust="spacingAndGlyphs" font-family="Liberation Sans" font-size="11" font-weight="normal" fill="#fff" stroke="#fff" stroke-width="3.8" stroke-linejoin="round">W</text><text x="66.0" y="207.2" textLength="3.4" lengthAdjust="spacingAndGlyphs" font-family="Liberation Sans" font-size="11" font-weight="normal" fill="#fff" stroke="#fff" stroke-width="3.8" stroke-linejoin="round">.</text><text x="72.60000000000001" y="207.2" textLength="9.6" lengthAdjust="spacingAndGlyphs" font-family="Liberation Sans" font-size="11" font-weight="normal" fill="#fff" stroke="#fff" stroke-width="3.8" stroke-linejoin="round">R</text><text x="83.60000000000001" y="207.2" textLength="7.8" lengthAdjust="spacingAndGlyphs" font-family="Liberation Sans" font-size="11" font-weight="normal" fill="#fff" stroke="#fff" stroke-width="3.8" stroke-linejoin="round">J</text><text x="92.30000000000001" y="207.2" textLength="9.4" lengthAdjust="spacingAndGlyphs" font-family="Liberation Sans" font-size="11" font-weight="normal" fill="#fff" stroke="#fff" stroke-width="3.8" stroke-linejoin="round">Z</text><text x="103.30000000000001" y="207.2" textLength="11.2" lengthAdjust="spacingAndGlyphs" font-family="Liberation Sans" font-size="11" font-weight="normal" fill="#fff" stroke="#fff" stroke-width="3.8" stroke-linejoin="round">X</text><text x="115.60000000000001" y="207.2" textLength="14.2" lengthAdjust="spacingAndGlyphs" font-family="Liberation Sans" font-size="11" font-weight="normal" fill="#fff" stroke="#fff" stroke-width="3.8" stroke-linejoin="round">W</text><text x="130.20000000000002" y="207.2" textLength="3.4" lengthAdjust="spacingAndGlyphs" font-family="Liberation Sans" font-size="11" font-weight="normal" fill="#fff" stroke="#fff" stroke-width="3.8" stroke-linejoin="round">.</text><text x="135.0" y="207.2" textLength="11.6" lengthAdjust="spacingAndGlyphs" font-family="Liberation Sans" font-size="11" font-weight="normal" fill="#fff" stroke="#fff" stroke-width="3.8" stroke-linejoin="round">C</text><text x="147.6" y="207.2" textLength="13.2" lengthAdjust="spacingAndGlyphs" font-family="Liberation Sans" font-size="11" font-weight="normal" fill="#fff" stroke="#fff" stroke-width="3.8" stroke-linejoin="round">O</text><text x="161.8" y="207.2" textLength="9" lengthAdjust="spacingAndGlyphs" font-family="Liberation Sans" font-size="11" font-weight="normal" fill="#fff" stroke="#fff" stroke-width="3.8" stroke-linejoin="round">M</text><text x="41.7" y="0" text-anchor="middle" transform="translate(0,193.3) scale(1,1.03)" font-family="Liberation Sans" font-size="29" font-weight="bold" fill="#1f77c6" stroke="#1f77c6" stroke-width="1.0" stroke-linejoin="round">软</text><text x="68.5" y="0" text-anchor="middle" transform="translate(0,193.3) scale(1,1.03)" font-family="Liberation Sans" font-size="29" font-weight="bold" fill="#1f77c6" stroke="#1f77c6" stroke-width="1.0" stroke-linejoin="round">件</text><text x="98" y="0" text-anchor="middle" transform="translate(0,193.3) scale(1,1.03)" font-family="Liberation Sans" font-size="29" font-weight="bold" fill="#1f77c6" stroke="#1f77c6" stroke-width="1.0" stroke-linejoin="round">自</text><text x="125.5" y="0" text-anchor="middle" transform="translate(0,193.3) scale(1,1.03)" font-family="Liberation Sans" font-size="29" font-weight="bold" fill="#1f77c6" stroke="#1f77c6" stroke-width="1.0" stroke-linejoin="round">学</text><text x="156" y="0" text-anchor="middle" transform="translate(0,193.3) scale(1,1.03)" font-family="Liberation Sans" font-size="29" font-weight="bold" fill="#1f77c6" stroke="#1f77c6" stroke-width="1.0" stroke-linejoin="round">网</text><text x="26.799999999999997" y="207.2" textLength="12.2" lengthAdjust="spacingAndGlyphs" font-family="Liberation Sans" font-size="11" font-weight="normal" fill="#1c93e4" stroke="#1c93e4" stroke-width="0.6" stroke-linejoin="round">W</text><text x="39.699999999999996" y="207.2" textLength="12" lengthAdjust="spacingAndGlyphs" font-family="Liberation Sans" font-size="11" font-weight="normal" fill="#1c93e4" stroke="#1c93e4" stroke-width="0.6" stroke-linejoin="round">W</text><text x="52.5" y="207.2" textLength="12.3" lengthAdjust="spacingAndGlyphs" font-family="Liberation Sans" font-size="11" font-weight="normal" fill="#1c93e4" stroke="#1c93e4" stroke-width="0.6" stroke-linejoin="round">W</text><text x="66.0" y="207.2" textLength="3.4" lengthAdjust="spacingAndGlyphs" font-family="Liberation Sans" font-size="11" font-weight="normal" fill="#1c93e4" stroke="#1c93e4" stroke-width="0.6" stroke-linejoin="round">.</text><text x="72.60000000000001" y="207.2" textLength="9.6" lengthAdjust="spacingAndGlyphs" font-family="Liberation Sans" font-size="11" font-weight="normal" fill="#1c93e4" stroke="#1c93e4" stroke-width="0.6" stroke-linejoin="round">R</text><text x="83.60000000000001" y="207.2" textLength="7.8" lengthAdjust="spacingAndGlyphs" font-family="Liberation Sans" font-size="11" font-weight="normal" fill="#1c93e4" stroke="#1c93e4" stroke-width="0.6" stroke-linejoin="round">J</text><text x="92.30000000000001" y="207.2" textLength="9.4" lengthAdjust="spacingAndGlyphs" font-family="Liberation Sans" font-size="11" font-weight="normal" fill="#1c93e4" stroke="#1c93e4" stroke-width="0.6" stroke-linejoin="round">Z</text><text x="103.30000000000001" y="207.2" textLength="11.2" lengthAdjust="spacingAndGlyphs" font-family="Liberation Sans" font-size="11" font-weight="normal" fill="#1c93e4" stroke="#1c93e4" stroke-width="0.6" stroke-linejoin="round">X</text><text x="115.60000000000001" y="207.2" textLength="14.2" lengthAdjust="spacingAndGlyphs" font-family="Liberation Sans" font-size="11" font-weight="normal" fill="#1c93e4" stroke="#1c93e4" stroke-width="0.6" stroke-linejoin="round">W</text><text x="130.20000000000002" y="207.2" textLength="3.4" lengthAdjust="spacingAndGlyphs" font-family="Liberation Sans" font-size="11" font-weight="normal" fill="#1c93e4" stroke="#1c93e4" stroke-width="0.6" stroke-linejoin="round">.</text><text x="135.0" y="207.2" textLength="11.6" lengthAdjust="spacingAndGlyphs" font-family="Liberation Sans" font-size="11" font-weight="normal" fill="#1c93e4" stroke="#1c93e4" stroke-width="0.6" stroke-linejoin="round">C</text><text x="147.6" y="207.2" textLength="13.2" lengthAdjust="spacingAndGlyphs" font-family="Liberation Sans" font-size="11" font-weight="normal" fill="#1c93e4" stroke="#1c93e4" stroke-width="0.6" stroke-linejoin="round">O</text><text x="161.8" y="207.2" textLength="9" lengthAdjust="spacingAndGlyphs" font-family="Liberation Sans" font-size="11" font-weight="normal" fill="#1c93e4" stroke="#1c93e4" stroke-width="0.6" stroke-linejoin="round">M</text></svg>
<div class="a" style="left:333px;top:399px;width:291px;height:121px;background:#ffffff"></div>
<div class="a" style="left:342px;top:415px;font-size:15px;font-weight:bold;color:#e10602;line-height:18px;letter-spacing:-0.3px">Bai</div>
<svg class="ic" style="left:360px;top:404px" width="32" height="32" viewBox="360 404 32 32"><g fill="#2932e1"><ellipse cx="369.6" cy="418.2" rx="2.7" ry="3.2" transform="rotate(-20 369.6 418.2)"/><ellipse cx="374.9" cy="413.6" rx="2.7" ry="3.6"/><ellipse cx="381.4" cy="413.6" rx="2.6" ry="3.6"/><ellipse cx="385.2" cy="418.2" rx="2.5" ry="3.2" transform="rotate(20 385.2 418.2)"/><path d="M377.5 419 C374.5 419 373.2 421.4 370.8 423.4 C368.6 425.4 368.4 429.4 371.8 430 C374 430.4 375.6 429.8 377.5 429.8 C379.4 429.8 381 430.4 383.2 430 C386.6 429.4 386.4 425.4 384.2 423.4 C381.8 421.4 380.5 419 377.5 419 Z"/></g><text x="377.5" y="428.8" text-anchor="middle" font-family="Liberation Sans" font-weight="bold" font-size="8.5" fill="#fff" textLength="11" lengthAdjust="spacingAndGlyphs">du</text></svg>
<div class="a" style="left:388px;top:416px;font-size:12px;font-weight:bold;color:#e10602;line-height:16px;letter-spacing:-0.5px;-webkit-text-stroke:0.5px #e10602">百度</div>
<div class="a" style="left:423px;top:407px;width:220px;height:140px;border:1.5px solid #5474f2;border-radius:6px;background:#fff"></div>
<div class="a" style="left:434px;top:415px;font-size:11.3px;color:#222;line-height:15px">ps油漆桶</div>
<div class="a" style="left:478px;top:416px;width:1px;height:13px;background:#222"></div>
<div class="a" style="left:433px;top:432px;width:191px;height:1px;background:#f0f0f0"></div>
<div class="a" style="left:433px;top:481px;font-size:10px;color:#626675;line-height:13px">ps油漆桶快捷键</div>
<div class="a" style="left:433px;top:501px;font-size:10px;color:#626675;line-height:13px">ps油漆桶填充有白边</div>
</body></html>
